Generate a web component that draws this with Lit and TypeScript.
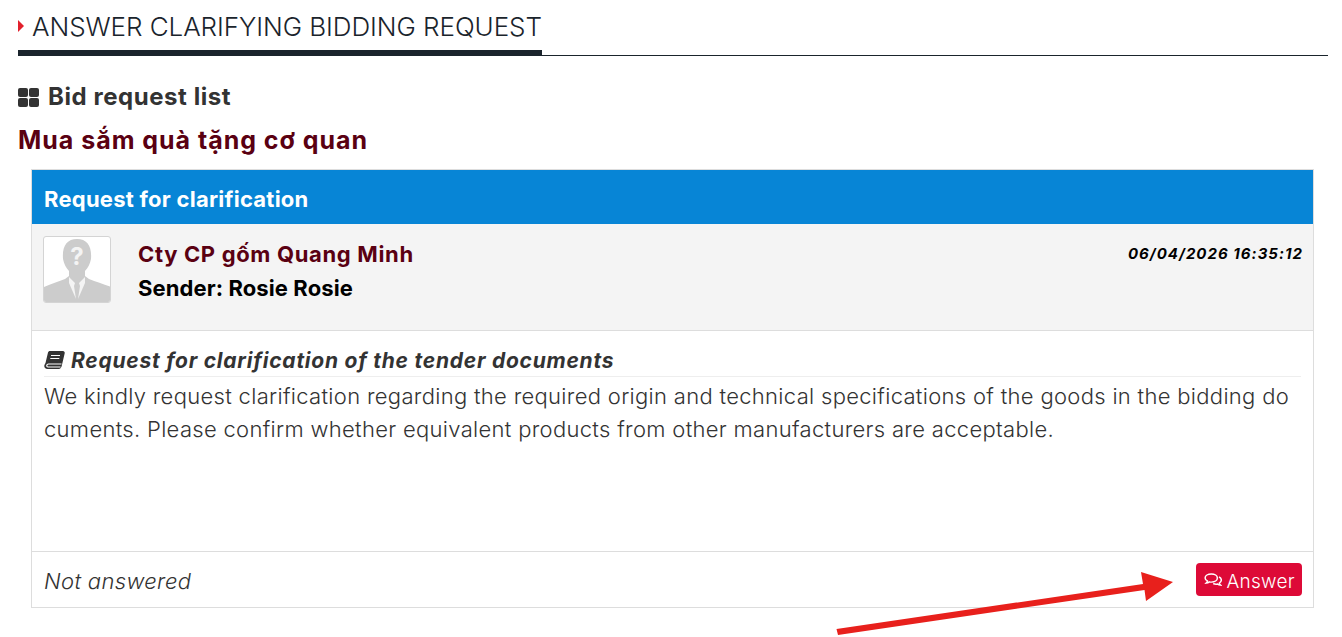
import { LitElement, html, css } from 'lit';
import { customElement } from 'lit/decorators.js';

@customElement('app-root')
export class AppRoot extends LitElement {
  static styles = css`
    :host {
      display: block;
      position: relative;
      height: 637px;
      overflow: hidden;
      background: #fff;
      font-family: Inter, "Liberation Sans", sans-serif;
      color: #333;
    }

    .page {
      padding: 0 14px 0 18px;
    }

    .page-head {
      box-sizing: border-box;
      height: 56px;
      border-bottom: 1px solid #1a242c;
    }

    .page-title {
      display: inline-flex;
      align-items: center;
      gap: 9px;
      height: 56px;
      box-sizing: border-box;
      padding-top: 2px;
      border-bottom: 6px solid #1a242c;
      margin: 0;
      font-size: 26px;
      font-weight: 300;
      color: #1a242c;
      letter-spacing: -0.06px;
      white-space: nowrap;
    }

    .caret {
      width: 0;
      height: 0;
      border-left: 6px solid #e2202c;
      border-top: 6px solid transparent;
      border-bottom: 6px solid transparent;
      margin-right: -1px;
    }

    .section {
      display: flex;
      align-items: center;
      gap: 9px;
      margin: 26px 0 0;
      font-size: 24px;
      line-height: 30px;
      font-weight: 700;
      color: #333;
      letter-spacing: 0.56px;
    }

    .bid-name {
      margin: 13px 0 0;
      font-size: 25px;
      line-height: 30px;
      font-weight: 700;
      color: #5a0012;
      letter-spacing: 0.97px;
    }

    .card {
      margin: 14px 14px 0 13px;
      border: 1px solid #ddd;
      height: 439px;
      box-sizing: border-box;
      display: flex;
      flex-direction: column;
    }

    .card-head {
      height: 54px;
      box-sizing: border-box;
      display: flex;
      align-items: center;
      padding: 3px 12px 0;
      background: #0785d6;
      color: #fff;
      font-size: 22px;
      font-weight: 700;
      letter-spacing: 0.25px;
    }

    .sender-row {
      height: 107px;
      box-sizing: border-box;
      background: #f4f4f4;
      border-bottom: 1px solid #ddd;
      padding: 12px 10px 0 11px;
      display: flex;
    }

    .avatar {
      width: 68px;
      height: 67px;
      flex: none;
      box-sizing: border-box;
      border: 1px solid #d4d4d4;
      border-radius: 3px;
      background: #fff;
      overflow: hidden;
    }

    .avatar svg {
      display: block;
    }

    .sender {
      flex: 1;
      margin: 1px 0 0 27px;
    }

    .company {
      font-size: 22px;
      line-height: 34px;
      font-weight: 700;
      color: #5a0012;
      letter-spacing: 0.66px;
    }

    .person {
      font-size: 22px;
      line-height: 34px;
      font-weight: 700;
      color: #000;
      letter-spacing: 0.1px;
    }

    .time {
      margin-top: 1px;
      font-size: 15px;
      line-height: 34px;
      font-weight: 700;
      font-style: italic;
      color: #000;
      letter-spacing: 1.03px;
    }

    .body {
      flex: 1;
      padding: 15px 12px 0;
    }

    .subject {
      display: flex;
      align-items: center;
      gap: 6px;
      height: 31px;
      box-sizing: border-box;
      padding-bottom: 2px;
      border-bottom: 1px solid #eee;
      font-size: 21px;
      font-weight: 700;
      font-style: italic;
      color: #333;
      letter-spacing: 0.76px;
    }

    .message {
      margin: 3px 0 0;
      font-size: 22px;
      line-height: 33px;
      font-weight: 300;
      color: #333;
      letter-spacing: 0.31px;
      word-break: break-all;
    }

    .card-foot {
      height: 56px;
      box-sizing: border-box;
      border-top: 1px solid #ddd;
      padding: 0 11px 0 12px;
      display: flex;
      align-items: center;
      justify-content: space-between;
    }

    .status {
      margin-top: 3px;
      font-size: 22px;
      font-weight: 300;
      font-style: italic;
      color: #333;
      letter-spacing: 0.33px;
    }

    .answer {
      display: inline-flex;
      align-items: center;
      gap: 4px;
      width: 106px;
      height: 33px;
      box-sizing: border-box;
      padding: 3px 7px 0 8px;
      border: none;
      border-radius: 4px;
      background: #dd0a37;
      color: #fff;
      font-family: inherit;
      font-size: 19px;
      font-weight: 300;
      letter-spacing: 0.3px;
      white-space: nowrap;
    }

    .answer svg {
      margin-top: -3px;
    }

    .arrow {
      position: absolute;
      left: 830px;
      top: 565px;
    }
  `;

  render() {
    return html`
      <div class="page">
        <div class="page-head">
          <h1 class="page-title"><span class="caret"></span>ANSWER CLARIFYING BIDDING REQUEST</h1>
        </div>
        <h2 class="section">
          <svg width="21" height="19" viewBox="0 0 21 19" fill="#333">
            <rect width="10" height="9" rx="2"></rect>
            <rect x="11" width="10" height="9" rx="2"></rect>
            <rect y="10" width="10" height="9" rx="2"></rect>
            <rect x="11" y="10" width="10" height="9" rx="2"></rect>
          </svg>
          Bid request list
        </h2>
        <h2 class="bid-name">Mua sắm quà tặng cơ quan</h2>
        <section class="card">
          <div class="card-head">Request for clarification</div>
          <div class="sender-row">
            <div class="avatar">
              <svg width="66" height="65" viewBox="0 0 66 65">
                <path fill="#ccc" d="M0 65V50c6-3 14-5 21-8l4-3v-5c-3-3-5-7-6-12-1-13 4-20 14-20s15 7 14 20c-1 5-3 9-6 12v5l4 3c7 3 15 5 22 8v15z"></path>
                <path fill="#f4f4f4" d="M25 40l6 6-1 3 2 13-7-16zM41 40l-6 6 1 3-2 13 7-16z"></path>
                <text x="33" y="28" text-anchor="middle" font-size="24" font-weight="700" fill="#f4f4f4">?</text>
              </svg>
            </div>
            <div class="sender">
              <div class="company">Cty CP gốm Quang Minh</div>
              <div class="person">Sender: Rosie Rosie</div>
            </div>
            <div class="time">06/04/2026 16:35:12</div>
          </div>
          <div class="body">
            <div class="subject">
              <svg width="21" height="18" viewBox="0 0 21 18">
                <path fill="#333" d="M6 0h13c1 0 2 1 1.700 2.200l-3 12.800c-.4 1.500-1.200 3-3 3H3.500C1.500 18 0 16.500.3 14.500.5 13.500 1 12.800 1.500 12L4 1.500C4.200.600 5 0 6 0z"></path>
                <path fill="none" stroke="#fff" stroke-width="1.200" d="M7 4.500h9M6.300 7.500h9M17.500 13H4.500c-2 0-2.500 2.500-.5 3h12.500"></path>
              </svg>
              Request for clarification of the tender documents
            </div>
            <p class="message">We kindly request clarification regarding the required origin and technical specifications of the goods in the bidding documents. Please confirm whether equivalent products from other manufacturers are acceptable.</p>
          </div>
          <div class="card-foot">
            <span class="status">Not answered</span>
            <button class="answer">
              <svg width="20" height="16" viewBox="0 0 20 16" fill="none" stroke="#fff" stroke-width="1.600">
                <path d="M8 1.500c3.600 0 6.500 1.900 6.500 4.400s-2.900 4.400-6.500 4.400c-.8 0-1.500-.1-2.200-.3-1 .8-2.200 1.300-3.400 1.400.7-.7 1.200-1.500 1.300-2.400C2.200 8.500 1.200 7.300 1.200 5.900c0-2.500 3-4.400 6.800-4.400z"></path>
                <path d="M16.300 4.700c1.500.8 2.500 2 2.500 3.400 0 1.300-.9 2.500-2.200 3.200.1.900.6 1.600 1.200 2.200-1.100-.1-2.200-.5-3-1.200-1.500.4-3.400.2-4.800-.5"></path>
              </svg>
              Answer
            </button>
          </div>
        </section>
      </div>
      <svg class="arrow" width="350" height="72" viewBox="830 565 350 72">
        <path fill="#e8201c" d="M838 635L836.500 629 1143 584 1141 572 1173 582 1146 601 1144.500 590z"></path>
      </svg>
    `;
  }
}
